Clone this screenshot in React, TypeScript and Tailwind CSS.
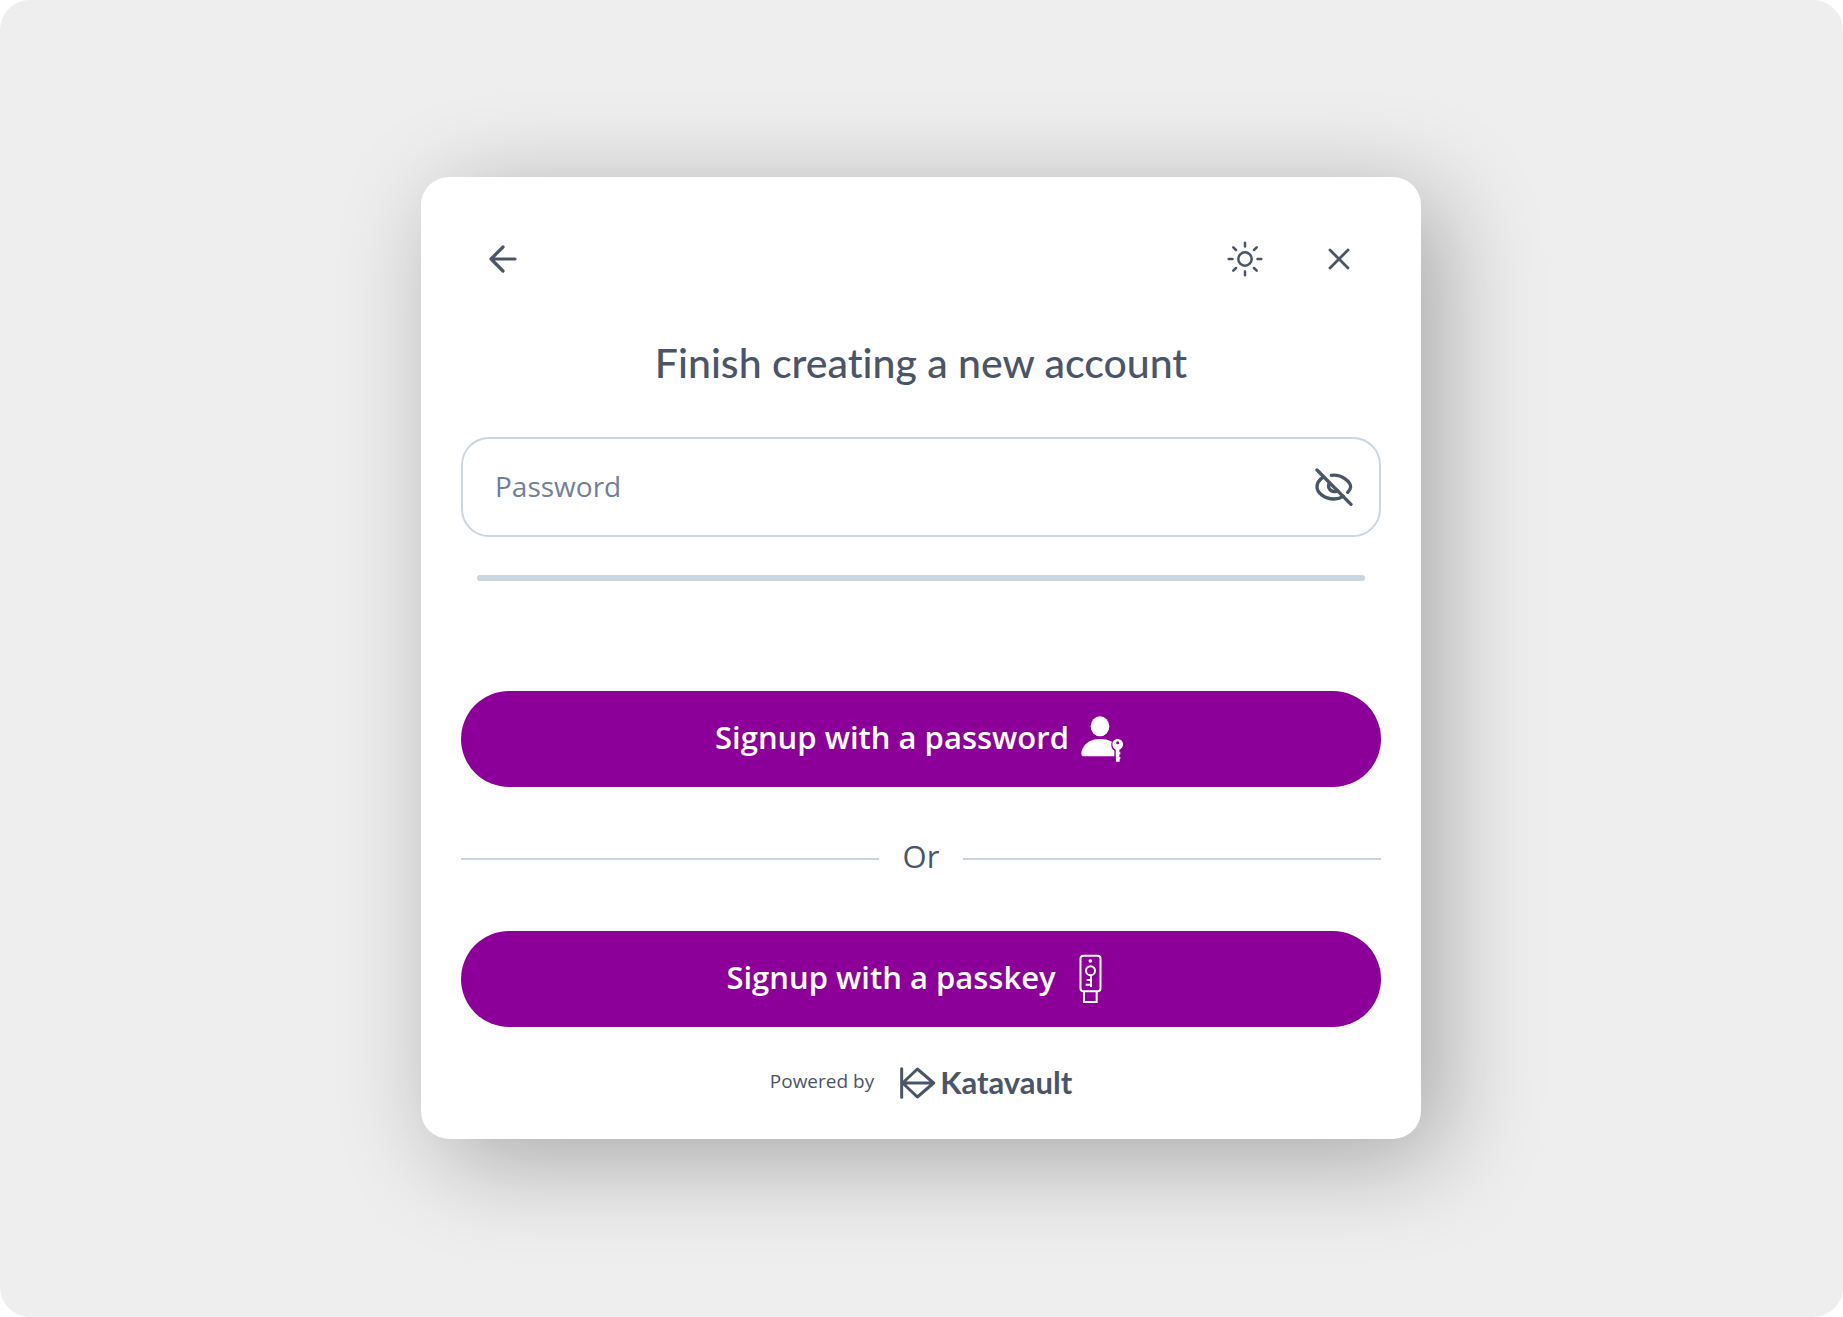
import type { ReactNode } from 'react';

function ArrowLeft() {
  return (
    <svg className="h-8 w-8" viewBox="0 0 32 32" fill="none" stroke="currentColor" strokeWidth="3.2" strokeLinecap="round" strokeLinejoin="round" aria-hidden="true">
      <path d="M28 16H4M16 4L4 16L16 28" />
    </svg>
  );
}

function Sun() {
  return (
    <svg className="h-10 w-10" viewBox="-20 -20 40 40" fill="none" stroke="currentColor" strokeWidth="2.5" strokeLinecap="round" aria-hidden="true">
      <circle r="6.7" />
      <path d="M0-16.300V-12.500M0 16.300V12.500M-16.300 0H-12.500M16.300 0H12.500M-11.700-11.700L-9-9M11.700-11.700L9-9M-11.700 11.700L-9 9M11.700 11.700L9 9" />
    </svg>
  );
}

function Close() {
  return (
    <svg className="h-8 w-8" viewBox="-16 -16 32 32" fill="none" stroke="currentColor" strokeWidth="2.8" strokeLinecap="round" aria-hidden="true">
      <path d="M-9-9L9 9M9-9L-9 9" />
    </svg>
  );
}

function EyeOff() {
  return (
    <svg className="h-10 w-10" viewBox="76 81 120 120" fill="none" stroke="currentColor" strokeWidth="10" strokeLinecap="round" strokeLinejoin="round" aria-hidden="true">
      <path d="M82 90L184 193" />
      <path d="M101 111C89 119 82 132 82 141C82 156 102 177 133 177C143 177 153 174 161 169" />
      <path d="M125 106C158 102 183 127 183 141C183 147 179 152 174 157" />
      <path d="M119 129C113 139 119 155 134 155C138 155 142 153 144 152" />
    </svg>
  );
}

function UserKey() {
  return (
    <svg className="h-12 w-12" viewBox="56 41 144 144" fill="currentColor" aria-hidden="true">
      <ellipse cx="119" cy="78" rx="28" ry="30" />
      <path d="M118 116C96 116 79 125 70 139C65 146 63 153 63 160C63 165 66 168 71 168H162V151C155 147 152 140 153 130C153 128 154 126 155 124C144 118 132 116 118 116Z" />
      <path fillRule="evenodd" d="M172 116C181 116 188 123 188 132C188 140 184 145 177 148V156H180V162H177V170H180V176H178V184H167L166 148C160 145 156 140 156 132C156 123 163 116 172 116ZM172 123A4.500 4.500 0 1 0 172 132A4.500 4.500 0 1 0 172 123Z" />
    </svg>
  );
}

function SecurityKey() {
  return (
    <svg className="h-12 w-12 overflow-visible" viewBox="23 42 144 144" fill="none" stroke="currentColor" strokeWidth="6" aria-hidden="true">
      <rect x="60.500" y="47" width="60" height="107" rx="9" />
      <path d="M71 154V186H109V154" />
      <circle cx="90" cy="63" r="5.500" fill="currentColor" stroke="none" />
      <circle cx="90.500" cy="92" r="13.500" />
      <path d="M92 106V141M92 120H79M92 134H76" />
    </svg>
  );
}

function Logo() {
  return (
    <svg className="h-8 w-9" viewBox="423 50 108 96" fill="none" stroke="currentColor" strokeWidth="9" strokeLinecap="round" strokeLinejoin="round" aria-hidden="true">
      <path d="M428 55V141" />
      <path d="M431 98L475 56L524 98L475 140ZM431 98H524" />
    </svg>
  );
}

function PrimaryButton({ children, className }: { children: ReactNode; className: string }) {
  return (
    <button type="submit" className={`flex h-24 w-full items-center justify-center rounded-full bg-[#8c0099] pb-0.5 text-[31px] font-semibold text-white ${className}`}>
      {children}
    </button>
  );
}

export default function App() {
  return (
    <div className="min-h-screen bg-white">
      <main className="flex min-h-screen items-center justify-center rounded-[30px] bg-[#eeeeee] pr-px pb-0.5 font-['Open_Sans',sans-serif] text-[#4a5568]">
        <form onSubmit={(e) => e.preventDefault()} className="w-full max-w-[1000px] rounded-[28px] bg-white px-10 pt-10 pb-9 shadow-[20px_20px_100px_rgba(0,0,0,0.30)]">
          <header className="flex h-21 items-center justify-between px-6">
            <button type="button" aria-label="Back" className="flex h-8 w-9 items-center justify-center"><ArrowLeft /></button>
            <div className="flex items-center gap-[58px]">
              <button type="button" aria-label="Toggle colour theme"><Sun /></button>
              <button type="button" aria-label="Close" className="mr-0.5"><Close /></button>
            </div>
          </header>
          <h1 className="mt-[34px] text-center font-['Lato',sans-serif] text-[41px] leading-14 font-medium [font-variant-ligatures:none]">Finish creating a new account</h1>
          <div className="mt-[46px] flex h-25 items-center rounded-[28px] border-2 border-[#cbd5e0] pr-6 pl-8">
            <input type="password" aria-label="Password" placeholder="Password" className="min-w-0 flex-1 bg-transparent pb-0.5 text-[28px] outline-none placeholder:text-[#718096] placeholder:opacity-100" />
            <button type="button" aria-label="Show password"><EyeOff /></button>
          </div>
          <div role="progressbar" aria-label="Password strength" aria-valuenow={0} aria-valuemin={0} aria-valuemax={100} className="mx-4 mt-[38px] h-1.5 rounded-full bg-[#cbd5e0]" />
          <PrimaryButton className="mt-[110px] gap-2.5">Signup with a password <UserKey /></PrimaryButton>
          <div className="my-12 flex h-12 items-center gap-6 text-[31px]">
            <span className="h-0.5 flex-1 bg-[#cbd5e0]" />
            <span className="pb-1">Or</span>
            <span className="h-0.5 flex-1 bg-[#cbd5e0]" />
          </div>
          <PrimaryButton className="gap-3">Signup with a passkey <SecurityKey /></PrimaryButton>
          <footer className="mt-9 flex h-10 items-center justify-center gap-[26px] text-[19px]">
            <span className="pb-0.5">Powered by</span>
            <a href="#katavault" className="flex items-center gap-1 font-['Lato',sans-serif] text-[31px] font-bold"><Logo />Katavault</a>
          </footer>
        </form>
      </main>
    </div>
  );
}
